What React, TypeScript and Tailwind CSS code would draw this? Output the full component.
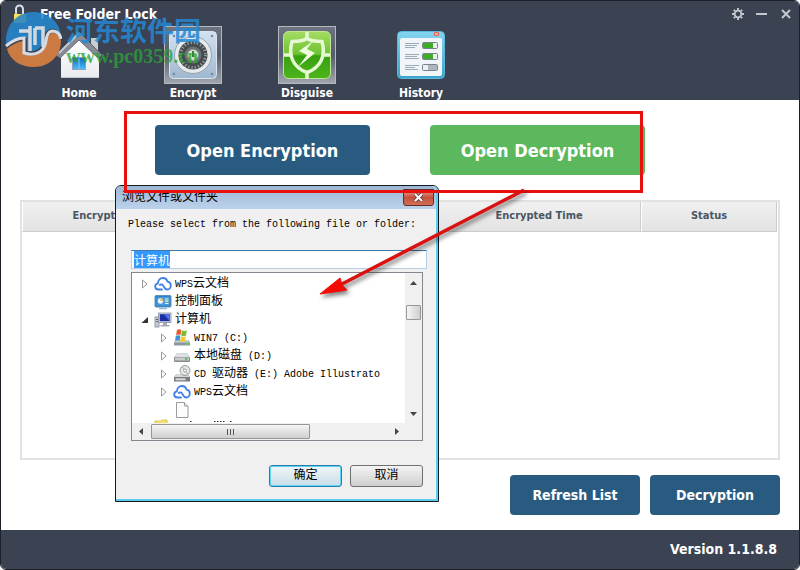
import { useEffect, useRef, type ReactNode } from "react";

const cloud = (
  <svg width="18" height="18" viewBox="0 0 18 18" fill="none" stroke="#3f7fe8" strokeWidth="1.8" strokeLinecap="round" strokeLinejoin="round">
    <path d="M8 14.500H4.600C2.600 14.500 1.200 13.200 1.200 11.500c0-1.600 1.100-2.800 2.700-3.100C4 5.300 6 3 8.800 3c2.300 0 4.200 1.500 4.800 3.700 1.900.3 3.200 1.900 3.200 3.800 0 2.200-1.500 4-3.600 4-1.300 0-2.100-.8-2.700-1.800l-1.300-2C8.400 9.300 6.900 9 5.800 10" />
  </svg>
);

const controlPanel = (
  <svg width="18" height="18" viewBox="0 0 18 18">
    <rect x="1" y="2.500" width="16" height="11.500" rx="1" fill="#2f7fc4" stroke="#5b93bd" />
    <rect x="2.500" y="4" width="13" height="8.500" fill="#4a9bdc" />
    <circle cx="6.500" cy="8" r="2.700" fill="#e9f5ff" />
    <path d="M6.500 8V5.300A2.700 2.700 0 0 1 9.200 8z" fill="#f2b83a" />
    <path d="M11 6h3.500M11 8.200h3.500M11 10.500h3.500" stroke="#f3f8d8" strokeWidth="1.200" />
    <path d="M5 15.500h8" stroke="#9ab7cf" strokeWidth="1.500" />
  </svg>
);

const computer = (
  <svg width="18" height="18" viewBox="0 0 18 18">
    <rect x="1" y="6" width="4" height="10" fill="#c7ccd4" stroke="#7e8793" strokeWidth=".8" />
    <path d="M2 8.500h2M2 10.500h2" stroke="#5b6675" />
    <rect x="4.500" y="2" width="12.500" height="9.500" fill="#d4d8df" stroke="#8790a0" strokeWidth=".8" />
    <rect x="5.800" y="3.200" width="10" height="7" fill="#1c2fa8" />
    <path d="M10 3.200h5.800v7z" fill="#4d74e4" />
    <path d="M9 12h4v2h2.500v1.500h-9V14H9z" fill="#a3aab5" />
  </svg>
);

const winDrive = (
  <svg width="18" height="18" viewBox="0 0 18 18">
    <path d="M2.500 11h13l1.500 2.500v3H1v-3z" fill="#8e969d" />
    <path d="M2.500 11h13l1.500 2.500H1z" fill="#c6cccf" />
    <path d="M12.500 15h3" stroke="#54e04a" strokeWidth="1.500" />
    <path d="M4 1c1.800-1 3-.8 4.300 0l-.8 5c-1.500-.8-2.900-.8-4.400 0z" fill="#e8582a" />
    <path d="M9 1.300c1.500.8 3 .8 4.800 0L13 6.500c-1.500.7-3 .7-4.800 0z" fill="#7fba32" />
    <path d="M2.800 6.800c1.500-.7 2.900-.7 4.600 0l-.8 5c-1.500-.7-2.900-.7-4.500 0z" fill="#3c8fd8" />
    <path d="M8 7.200c1.500.7 3 .7 4.800 0l-.8 5c-1.600.8-3 .7-4.800 0z" fill="#f8c92d" />
  </svg>
);

const hardDrive = (
  <svg width="18" height="18" viewBox="0 0 18 18">
    <path d="M4 6.500h10l3 4v3q0 1.500-1.500 1.500h-13Q1 15 1 13.500v-3z" fill="#85888a" />
    <path d="M4 6.500h10l2.500 3.500h-15z" fill="#dedfe0" />
    <path d="M2 10.500h14v3H2z" fill="#c9cbcd" />
    <path d="M12 12h2.500" stroke="#32c62e" strokeWidth="1.500" />
  </svg>
);

const discDrive = (
  <svg width="18" height="18" viewBox="0 0 18 18">
    <path d="M3.500 9h11l2.500 3v4.500H1V12z" fill="#777c7f" />
    <path d="M3.500 9h11l2.500 3H1z" fill="#d6d9da" />
    <path d="M2.500 13.300h10v2h-10z" fill="#d9dbdb" />
    <circle cx="12" cy="5.500" r="5" fill="#e3e7e5" stroke="#8b9290" strokeWidth=".9" />
    <circle cx="12" cy="5.500" r="1.500" fill="#fff" stroke="#8b9290" strokeWidth=".8" />
    <path d="M9.500 2l1.500 2.500M14.500 9L13 6.800" stroke="#a8b5ad" />
  </svg>
);

const blankPage = (
  <svg width="18" height="18" viewBox="0 0 18 18">
    <path d="M3.500 1.500h8l3.500 3.500v11.500H3.500z" fill="#fcfcfc" stroke="#9b9b9b" />
    <path d="M11.500 1.500V5H15" fill="#eee" stroke="#9b9b9b" />
  </svg>
);

const folder = (
  <svg width="88" height="18" viewBox="0 0 88 18">
    <path d="M1 2h6l1-1h5v12H1z" fill="#f7e36c" stroke="#d8bd3c" strokeWidth=".8" />
    <path d="M36 2.500h1.500M60 2.500h1.500M63 2.500h1.500M66 2.500h1.500M69 2.500h1.500M76 2.500h1.500" stroke="#222" />
  </svg>
);

type Node = { text: string; icon: ReactNode; depth: 0 | 1; state?: "open" | "closed" };

const nodes: Node[] = [
  { text: "WPS云文档", icon: cloud, depth: 0, state: "closed" },
  { text: "控制面板", icon: controlPanel, depth: 0 },
  { text: "计算机", icon: computer, depth: 0, state: "open" },
  { text: "WIN7 (C:)", icon: winDrive, depth: 1, state: "closed" },
  { text: "本地磁盘 (D:)", icon: hardDrive, depth: 1, state: "closed" },
  { text: "CD 驱动器 (E:) Adobe Illustrato", icon: discDrive, depth: 1, state: "closed" },
  { text: "WPS云文档", icon: cloud, depth: 1, state: "closed" },
  { text: "", icon: blankPage, depth: 1 },
  { text: "", icon: folder, depth: 0 },
];

function Twisty({ state }: { state?: "open" | "closed" }) {
  return (
    <svg width="10" height="10" viewBox="0 0 10 10" className="shrink-0">
      {state === "closed" && <path d="M2.500 1v8l4.500-4z" fill="#fff" stroke="#999" />}
      {state === "open" && <path d="M8 2v6H1.500z" fill="#333" />}
    </svg>
  );
}

/* Latin glyphs come from the mono face, which needs a smaller size than the CJK face */
function MixedText({ text }: { text: string }) {
  return (
    <span className="whitespace-pre">
      {text.split(/([\u4e00-\u9fff]+)/).map((part, i) => (
        <span key={i} className={i % 2 ? "text-[12px]" : "text-[10px]"}>
          {part}
        </span>
      ))}
    </span>
  );
}

const HomeIcon = () => (
  <svg width="58" height="58" viewBox="0 0 58 58">
    <defs>
      <linearGradient id="wall" x2="0" y2="1"><stop stopColor="#fff" /><stop offset="1" stopColor="#e8ebef" /></linearGradient>
      <linearGradient id="pane" x2="0" y2="1"><stop stopColor="#1560c8" /><stop offset="1" stopColor="#47c4fa" /></linearGradient>
    </defs>
    <path d="M41 12h7v13l-7-7z" fill="#c9cdd4" />
    <path d="M29 12L11 30v22h38V30z" fill="url(#wall)" />
    <path d="M29 6L6 29l4 3 19-18 19 18 4-3z" fill="#858b95" stroke="#646b76" />
    <path d="M29 7L9 27" stroke="#c6cbd3" strokeWidth="2" />
    <rect x="22.500" y="31.500" width="13" height="12" fill="url(#pane)" stroke="#8fa1b6" />
    <path d="M29 32v11" stroke="#8cc8f2" />
    <path d="M11 51.500h38" stroke="#c4c9cf" />
  </svg>
);

const SafeIcon = () => (
  <svg width="56" height="56" viewBox="0 0 56 56">
    <defs><linearGradient id="safe" x2="0" y2="1"><stop stopColor="#d3e2f0" /><stop offset="1" stopColor="#9fb8d0" /></linearGradient></defs>
    <rect x="4.500" y="4.500" width="47" height="47" rx="4" fill="url(#safe)" stroke="#d9e6f2" />
    <g fill="#718ba6"><circle cx="9" cy="9" r="1.300" /><circle cx="47" cy="9" r="1.300" /><circle cx="9" cy="47" r="1.300" /><circle cx="47" cy="47" r="1.300" /></g>
    <circle cx="28" cy="28" r="18.500" fill="#e7eaec" stroke="#97a3ae" />
    <circle cx="28" cy="28" r="14.500" fill="#454b4d" />
    <circle cx="28" cy="28" r="12.500" fill="none" stroke="#949b9c" strokeWidth="3" strokeDasharray="1.300 2" />
    <circle cx="28" cy="28" r="8.500" fill="#6b7272" />
    <circle cx="28" cy="28" r="5.500" fill="#dbe6d7" stroke="#949b9c" />
    <path d="M28 24v6" stroke="#387a38" strokeWidth="2" />
  </svg>
);

const ShieldIcon = () => (
  <svg width="56" height="56" viewBox="0 0 56 56">
    <defs><linearGradient id="leaf" x2="0" y2="1"><stop stopColor="#a5dc62" /><stop offset=".48" stopColor="#6fc234" /><stop offset=".52" stopColor="#37a010" /><stop offset="1" stopColor="#4db51c" /></linearGradient></defs>
    <rect x="4.500" y="4.500" width="47" height="47" rx="5" fill="url(#leaf)" stroke="#bde796" />
    <g fill="none" stroke="#e6f8d2" strokeWidth="3.500">
      <path d="M28 5v7M28 45v7M5 28h6M45 28h6" />
      <path d="M28 11.500c-5 3-9 3-15 3-4 14 1 26 15 31 14-5 19-17 15-31-6 0-10 0-15-3z" />
    </g>
    <path d="M34 14L20 24l8 4-9 12 17-14-8-4z" fill="#eefbdf" />
  </svg>
);

const HistoryIcon = () => (
  <svg width="58" height="58" viewBox="0 0 58 58">
    <defs><linearGradient id="win" x2="0" y2="1"><stop stopColor="#83d5ee" /><stop offset="1" stopColor="#3ba3ce" /></linearGradient></defs>
    <rect x="5.500" y="5.500" width="47" height="47" rx="4" fill="url(#win)" stroke="#5bb8da" />
    <rect x="42" y="6" width="5" height="4" fill="#d85f57" />
    <path d="M43 6.500l3 3m0-3l-3 3" stroke="#fff" strokeWidth=".8" />
    <rect x="8" y="12" width="42" height="38" rx="2" fill="#f1f5fa" />
    <path d="M13 17.500h14M13 19.500h12M13 21.500h10M13 28.500h14M13 30.500h12M13 32.500h14M13 39.500h14M13 41.500h10M13 43.500h13" stroke="#9cabb8" />
    <g stroke="#77838f" fill="#edf0f2"><rect x="30.500" y="16.500" width="15" height="6" rx="1" /><rect x="30.500" y="27.500" width="15" height="6" rx="1" /><rect x="30.500" y="38.500" width="15" height="6" rx="1" /></g>
    <path d="M31 17h10v5H31zM31 28h10v5H31z" fill="#3fac27" />
    <path d="M36 39h9v5h-9z" fill="#aeb6bd" />
  </svg>
);

const tabs = [
  { label: "Home", icon: <HomeIcon />, framed: false },
  { label: "Encrypt", icon: <SafeIcon />, framed: true },
  { label: "Disguise", icon: <ShieldIcon />, framed: true },
  { label: "History", icon: <HistoryIcon />, framed: false },
];

function Header() {
  return (
    <header className="h-[99px] bg-[#3b4252] text-white">
      <div className="flex h-[25px] items-center pl-[10px] pr-[5px]">
        <svg width="18" height="22" viewBox="0 0 18 22" className="shrink-0">
          <path d="M5 11V6a3.500 3.500 0 0 1 7 0v5" fill="none" stroke="#d9dde1" strokeWidth="2" />
          <path d="M3 11h12v9H3z" fill="#e7ba21" />
          <path d="M3 11h7l-7 7z" fill="#f8df62" />
        </svg>
        <h1 className="ml-[11px] flex-1 text-[14px] font-bold leading-5">Free Folder Lock</h1>
        <div className="flex gap-[8px] text-[#c3c7ce]">
          <button aria-label="Settings" className="flex size-4 items-center justify-center">
            <svg width="14" height="14" viewBox="0 0 14 14" fill="none" stroke="currentColor">
              <circle cx="7" cy="7" r="3.300" strokeWidth="1.800" />
              <path d="M7 1v2M7 11v2M1 7h2M11 7h2M2.800 2.800l1.400 1.400M9.800 9.800l1.400 1.400M2.800 11.200l1.400-1.400M9.800 4.200l1.400-1.400" strokeWidth="1.900" />
            </svg>
          </button>
          <button aria-label="Minimize" className="flex size-4 items-center justify-center">
            <svg width="12" height="12" viewBox="0 0 12 12"><path d="M0 6h11" stroke="currentColor" strokeWidth="2" /></svg>
          </button>
          <button aria-label="Close" className="flex size-4 items-center justify-center">
            <svg width="10" height="10" viewBox="0 0 10 10"><path d="M1 1l8 8M9 1L1 9" stroke="currentColor" strokeWidth="2" /></svg>
          </button>
        </div>
      </div>
      <nav className="flex pl-[21px]">
        {tabs.map((t) => (
          <button key={t.label} className="flex w-[114px] flex-col items-center">
            <span className={t.framed ? "size-[58px] border border-[#b4b8c0] bg-linear-to-b from-[#6d7380] via-[#555c69] to-[#a1a5ad]" : "size-[58px]"}>{t.icon}</span>
            <span className="text-[12px] font-bold leading-[18px]">{t.label}</span>
          </button>
        ))}
      </nav>
    </header>
  );
}

function Watermark() {
  return (
    <div className="pointer-events-none absolute left-[4px] top-[10px] flex select-none items-center gap-[4px]">
      <svg width="57" height="57" viewBox="0 0 57 57" opacity=".88">
        <path d="M1 30C1 13 13 1 28 1s27 10 28 24c-3-7-8-9-13-6-6 4-4 12-8 17-3 4-8 5-13 4V27C14 27 7 31 1 35z" fill="#2688cf" />
        <path d="M2 38c4-4 10-7 16-8v13c11 4 20 0 23-9 2-6 2-12 7-12 4 0 7 3 8 8 0 15-12 26-27 26C15 56 5 49 2 38z" fill="#df8340" />
        <path d="M1 35c6-5 12-8 18-8v15c10 3 18 0 21-8 2-6 1-13 7-14 5 0 8 3 9 8" fill="none" stroke="#eef2f6" strokeWidth="3" />
        <path d="M14 20h11v20M25 20v-5M30 17h8v19M30 17v17" fill="none" stroke="#e7edf4" strokeWidth="3.500" />
      </svg>
      <div className="flex flex-col">
        <span className="font-['Noto_Sans_CJK_SC',sans-serif] text-[27px] font-bold leading-8 text-[#2489d4]/85">河东软件园</span>
        <span className="font-['Liberation_Serif',serif] text-[20px] font-bold leading-5 text-[#2ba338]/80">www.pc0359.cn</span>
      </div>
    </div>
  );
}

function FolderDialog() {
  const field = useRef<HTMLInputElement>(null);
  useEffect(() => {
    field.current?.focus();
    field.current?.select();
  }, []);
  return (
    <section
      role="dialog"
      aria-labelledby="dialog-title"
      className="absolute left-[114px] top-[184px] flex w-[324px] flex-col rounded-t-[6px] border border-[#101820] bg-[#f0f0f0] font-['Liberation_Mono','Noto_Sans_CJK_SC',monospace] text-[12px] text-black"
    >
      <div className="flex flex-col rounded-t-[5px] border-b-2 border-r-2 border-[#5fcdf0]">
        <div className="flex h-[23px] items-center justify-between rounded-t-[5px] bg-linear-to-b from-[#9eb6d4] to-[#bcd2ec] pl-[6px] pr-[2px]">
          <h2 id="dialog-title" className="leading-4">浏览文件或文件夹</h2>
          <button aria-label="Close dialog" className="flex h-[17px] w-[31px] items-center justify-center rounded-b-[3px] border border-[#6b2a26] bg-linear-to-b from-[#e3a497] via-[#c4503c] to-[#cf6f54]">
            <svg width="11" height="9" viewBox="0 0 11 9"><path d="M2 1l7 7M9 1L2 8" stroke="#5b3a42" strokeWidth="3.600" /><path d="M2 1l7 7M9 1L2 8" stroke="#fff" strokeWidth="2" /></svg>
          </button>
        </div>
        <div className="flex flex-col pl-[15px] pr-[13px] pb-[12px]">
          <label htmlFor="path" className="mt-[8px] -mx-[3px] whitespace-nowrap text-[10px] leading-4">
            Please select from the following file or folder:
          </label>
          <input
            id="path"
            ref={field}
            defaultValue="计算机"
            className="mt-[17px] -mr-[4px] h-[19px] border border-[#b5cfe7] border-t-[#3d7bad] bg-white px-[2px] text-[12px] leading-4 outline-none selection:bg-[#3399ff] selection:text-white"
          />
          <div className="mt-[3px] flex h-[169px] flex-col border border-[#828790] bg-white">
            <div className="flex min-h-0 flex-1">
              <ul className="min-w-0 flex-1 overflow-hidden pt-[2px]">
                {nodes.map((n, i) => (
                  <li key={i} className={n.depth ? "flex h-[18px] items-center pl-[27px]" : "flex h-[18px] items-center pl-[8px]"}>
                    <Twisty state={n.state} />
                    <span className="ml-[4px] mr-[3px] shrink-0">{n.icon}</span>
                    <MixedText text={n.text} />
                  </li>
                ))}
              </ul>
              <div className="flex w-[17px] flex-col items-center bg-[#f0f0f0]">
                <svg width="7" height="18" viewBox="0 0 7 18"><path d="M0 12l3.500-4L7 12z" fill="#444" /></svg>
                <span className="mt-[14px] h-[15px] w-[15px] rounded-[1px] border border-[#979797] bg-linear-to-r from-[#f5f5f5] to-[#cfcfcf]" />
                <svg width="7" height="18" viewBox="0 0 7 18" className="mt-auto"><path d="M0 7l3.500 4L7 7z" fill="#444" /></svg>
              </div>
            </div>
            <div className="flex h-[17px] items-center bg-[#f0f0f0]">
              <svg width="19" height="9" viewBox="0 0 19 9"><path d="M11 1L7 4.500 11 8z" fill="#444" /></svg>
              <span className="flex h-[15px] w-[159px] items-center justify-center gap-[2px] rounded-[1px] border border-[#979797] bg-linear-to-b from-[#f5f5f5] to-[#cfcfcf]">
                <i className="h-[6px] w-px bg-[#555]" />
                <i className="h-[6px] w-px bg-[#555]" />
                <i className="h-[6px] w-px bg-[#555]" />
              </span>
              <svg width="9" height="9" viewBox="0 0 9 9" className="ml-auto mr-[21px]"><path d="M3 1l4 3.500L3 8z" fill="#444" /></svg>
            </div>
          </div>
          <div className="mt-[24px] flex justify-end gap-[8px]">
            <button className="h-[22px] w-[73px] rounded-[3px] border border-[#2c7ea8] bg-linear-to-b from-[#f0f6f9] to-[#c9dde8] leading-4 shadow-[inset_0_0_0_1px_#5fd3f5]">确定</button>
            <button className="h-[22px] w-[73px] rounded-[3px] border border-[#707070] bg-linear-to-b from-[#f4f4f4] to-[#cfcfcf] leading-4">取消</button>
          </div>
        </div>
      </div>
    </section>
  );
}

function Annotation() {
  return (
    <>
      <div className="pointer-events-none absolute left-[123px] top-[110px] h-[82px] w-[519px] border-3 border-[#e8100c]" />
      <svg width="220" height="120" viewBox="0 0 220 120" className="pointer-events-none absolute left-[311px] top-[185px] drop-shadow-[2px_3px_2px_rgba(0,0,0,0.5)]">
        <path d="M212 4L30 98" stroke="#d9120f" strokeWidth="3.500" />
        <path d="M8 108L28 92l2 7 5 5z" fill="#f50b05" stroke="#f50b05" />
      </svg>
    </>
  );
}

const th = "border-b border-r border-[#cbcbcb] border-l border-l-white bg-linear-to-b from-[#f1f1f1] to-[#e2e2e2] p-0 text-center font-bold";

export default function App() {
  return (
    <div className="relative flex min-h-screen flex-col overflow-hidden rounded-[6px] border border-[#1c2029] bg-white font-['DejaVu_Sans_Condensed','Noto_Sans','Noto_Sans_CJK_SC',sans-serif]">
      <Header />
      <main className="flex flex-1 flex-col px-[19px] pb-[15px] pt-[25px] text-white">
        <div className="flex justify-center gap-[60px]">
          <button className="h-[50px] w-[215px] rounded-[4px] bg-[#295b81] text-[18px] font-bold">Open Encryption</button>
          <button className="h-[50px] w-[215px] rounded-[4px] bg-[#5cb85c] text-[18px] font-bold">Open Decryption</button>
        </div>
        <div className="mt-[25px] flex-1 border-2 border-[#e2e2e2] pr-[1px]">
          <table className="w-full table-fixed border-separate border-spacing-0 text-[11px] text-[#4a5661]">
            <thead>
              <tr className="h-[30px]">
                <th scope="col" className={`w-[24%] ${th}`}>Encrypted File</th>
                <th scope="col" className={`w-[31%] ${th}`} />
                <th scope="col" className={`w-[27%] ${th}`}>Encrypted Time</th>
                <th scope="col" className={`w-[18%] ${th}`}>Status</th>
              </tr>
            </thead>
          </table>
        </div>
        <div className="mt-[15px] flex justify-end gap-[10px]">
          <button className="h-[40px] w-[130px] rounded-[4px] bg-[#295b81] text-[14px] font-bold">Refresh List</button>
          <button className="h-[40px] w-[130px] rounded-[4px] bg-[#295b81] text-[14px] font-bold">Decryption</button>
        </div>
      </main>
      <footer className="flex h-[39px] items-center justify-end bg-[#3b4252] pr-[22px] text-[14px] font-bold text-white">Version 1.1.8.8</footer>
      <Watermark />
      <FolderDialog />
      <Annotation />
    </div>
  );
}
